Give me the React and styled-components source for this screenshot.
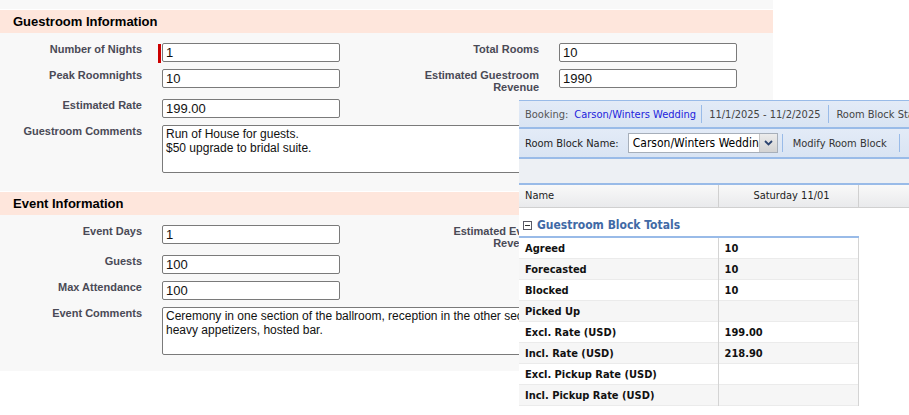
import React from 'react';
import styled, { createGlobalStyle } from 'styled-components';

const GlobalStyle = createGlobalStyle`
  body {
    margin: 0;
    background: #fff;
    font-family: "Liberation Sans", Arial, sans-serif;
  }
`;

const Page = styled.div`
  position: relative;
  width: 909px;
  height: 415px;
  overflow: hidden;
  background: #fff;
`;

const DetailPanel = styled.div`
  width: 773px;
  background: #f8f8f8;
  padding-top: 9px;
  display: flex;
  flex-direction: column;
  gap: 2px;
`;

const SectionHeader = styled.h3`
  margin: 0;
  height: 23px;
  border-top: 1px solid #fff;
  background: #fee6dc;
  padding-left: 13px;
  font-size: 13px;
  line-height: 23px;
  font-weight: bold;
  color: #000;
`;

const FieldGrid = styled.div`
  display: grid;
  grid-template-columns: 152px 248px 149px 1fr;
  padding: 7px 0 12px;
`;

const Label = styled.div`
  padding: 3px 10px 3px 2px;
  text-align: right;
  font-size: 11px;
  line-height: 12px;
  font-weight: bold;
  color: #4a4a56;
`;

const Data = styled.div`
  position: relative;
  padding: 3px 10px 4px;
  grid-column: ${p => (p.$wide ? 'span 3' : 'auto')};
`;

const Required = styled.span`
  position: absolute;
  left: 6px;
  top: 4px;
  width: 3px;
  height: 19px;
  background: #c00;
`;

const TextInput = styled.input`
  display: block;
  box-sizing: border-box;
  width: 178px;
  height: 19px;
  padding: 0 3px;
  border: 1px solid #7a7a7a;
  border-radius: 2px;
  background: #fff;
  font: 13px "Liberation Sans", Arial, sans-serif;
  color: #111;
`;

const Comments = styled.textarea`
  display: block;
  box-sizing: border-box;
  width: 520px;
  height: 48px;
  padding: 1px 3px;
  border: 1px solid #7a7a7a;
  border-radius: 2px;
  background: #fff;
  font: 12px/14px "Liberation Sans", Arial, sans-serif;
  color: #111;
  resize: none;
  overflow: hidden;
`;

/* room block window lying over the detail page */

const BlockWindow = styled.div`
  position: absolute;
  left: 519px;
  top: 100px;
  right: 0;
  bottom: 0;
  background: #fff;
  border-top: 1px solid #99bbe8;
  font-family: "DejaVu Sans Condensed", "DejaVu Sans", sans-serif;
  font-size: 11px;
  overflow: hidden;
`;

const Bar = styled.div`
  display: flex;
  align-items: center;
  height: ${p => p.$h}px;
  padding-left: 6px;
  background: ${p => p.$bg || 'linear-gradient(#e3ebf7, #d9e4f3)'};
  border-bottom: 2px solid #99bbe8;
  white-space: nowrap;
`;

const BarLabel = styled.span`
  color: ${p => p.$color || '#555'};
  margin-right: ${p => p.$gap || 0}px;
`;

const BookingLink = styled.a`
  color: #2323dc;
  text-decoration: none;
`;

const Separator = styled.span`
  flex: none;
  width: 1px;
  height: 18px;
  margin: 0 ${p => p.$m || 7}px 0 ${p => p.$ml || p.$m || 5}px;
  background: #99bbe8;
`;

const Select = styled.div`
  display: flex;
  box-sizing: border-box;
  width: 150px;
  height: 20px;
  border: 1px solid #a7afba;
  background: #fff;
`;

const SelectText = styled.span`
  flex: 1;
  overflow: hidden;
  padding-left: 4px;
  font-size: 12px;
  line-height: 18px;
  color: #000;
`;

const SelectButton = styled.span`
  display: flex;
  align-items: center;
  justify-content: center;
  width: 17px;
  border-left: 1px solid #c6c6c6;
  background: linear-gradient(#ececec, #d3d3d3);
`;

const ToolButton = styled.span`
  padding: 0 6px;
  color: #333;
`;

const GridHeader = styled.div`
  display: flex;
  height: 22px;
  border-bottom: 1px solid #d0d0d0;
  background: linear-gradient(#f9f9f9, #e9eaec);
  color: #222;
`;

const HeaderCell = styled.div`
  box-sizing: border-box;
  flex: ${p => (p.$w ? `0 0 ${p.$w}px` : '1')};
  padding-left: 6px;
  line-height: 22px;
  text-align: ${p => (p.$center ? 'center' : 'left')};
  border-left: ${p => (p.$first ? 'none' : '1px solid #d0d0d0')};
`;

const TotalsHeading = styled.div`
  display: flex;
  align-items: center;
  gap: 5px;
  box-sizing: border-box;
  height: 28px;
  padding: 7px 0 0 4px;
  font-size: 12px;
  line-height: 15px;
  font-weight: bold;
  color: #416aa6;
`;

const TotalsTable = styled.table`
  width: 339px;
  border-collapse: collapse;
  border-top: 2px solid #99bbe8;
  table-layout: fixed;
`;

const Row = styled.tr`
  background: ${p => (p.$alt ? '#f6f6f6' : '#fff')};
  border-bottom: 1px solid #ebebeb;
`;

const Cell = styled.td`
  box-sizing: border-box;
  width: ${p => p.$w}px;
  height: 21px;
  padding: 3px 0 0 6px;
  font-weight: bold;
  line-height: 14px;
  color: #111;
  border-right: 1px solid #d4d4d4;
  white-space: nowrap;
`;

const Chevron = () => (
  <svg width="9" height="6" viewBox="0 0 9 6">
    <polyline points="1,1 4.5,4.5 8,1" fill="none" stroke="#2c4470" strokeWidth="1.8" />
  </svg>
);

const CollapseIcon = () => (
  <svg width="9" height="9" viewBox="0 0 9 9">
    <rect x="0.5" y="0.5" width="8" height="8" fill="#fff" stroke="#5a5a66" />
    <line x1="2" y1="4.5" x2="7" y2="4.5" stroke="#333" />
  </svg>
);

const totals = [
  ['Agreed', '10'],
  ['Forecasted', '10'],
  ['Blocked', '10'],
  ['Picked Up', ''],
  ['Excl. Rate (USD)', '199.00'],
  ['Incl. Rate (USD)', '218.90'],
  ['Excl. Pickup Rate (USD)', ''],
  ['Incl. Pickup Rate (USD)', ''],
];

const App = () => {
  return (
    <Page>
      <GlobalStyle />
      <DetailPanel>
        <section>
          <SectionHeader>Guestroom Information</SectionHeader>
          <FieldGrid>
            <Label>Number of Nights</Label>
            <Data>
              <Required />
              <TextInput defaultValue="1" />
            </Data>
            <Label>Total Rooms</Label>
            <Data>
              <TextInput defaultValue="10" />
            </Data>

            <Label>Peak Roomnights</Label>
            <Data>
              <TextInput defaultValue="10" />
            </Data>
            <Label>Estimated Guestroom Revenue</Label>
            <Data>
              <TextInput defaultValue="1990" />
            </Data>

            <Label>Estimated Rate</Label>
            <Data>
              <TextInput defaultValue="199.00" />
            </Data>
            <Label />
            <Data />

            <Label>Guestroom Comments</Label>
            <Data $wide>
              <Comments defaultValue={'Run of House for guests.\n$50 upgrade to bridal suite.'} />
            </Data>
          </FieldGrid>
        </section>

        <section>
          <SectionHeader>Event Information</SectionHeader>
          <FieldGrid>
            <Label>Event Days</Label>
            <Data>
              <TextInput defaultValue="1" />
            </Data>
            <Label>
              Estimated Event
              <br />
              Revenue
            </Label>
            <Data>
              <TextInput defaultValue="" />
            </Data>

            <Label>Guests</Label>
            <Data>
              <TextInput defaultValue="100" />
            </Data>
            <Label />
            <Data />

            <Label>Max Attendance</Label>
            <Data>
              <TextInput defaultValue="100" />
            </Data>
            <Label />
            <Data />

            <Label>Event Comments</Label>
            <Data $wide>
              <Comments
                defaultValue={
                  'Ceremony in one section of the ballroom, reception in the other section,\nheavy appetizers, hosted bar.'
                }
              />
            </Data>
          </FieldGrid>
        </section>
      </DetailPanel>

      <BlockWindow>
        <Bar $h={26}>
          <BarLabel $gap={6}>Booking:</BarLabel>
          <BookingLink href="#">Carson/Winters Wedding</BookingLink>
          <Separator />
          <BarLabel $color="#444">11/1/2025 - 11/2/2025</BarLabel>
          <Separator $ml={8} />
          <BarLabel $color="#444">Room Block Status</BarLabel>
        </Bar>

        <Bar $h={28}>
          <BarLabel $color="#222" $gap={9}>Room Block Name:</BarLabel>
          <Select>
            <SelectText>Carson/Winters Wedding</SelectText>
            <SelectButton>
              <Chevron />
            </SelectButton>
          </Select>
          <Separator $m={4} />
          <ToolButton>Modify Room Block</ToolButton>
          <Separator $m={4} $ml={6} />
          <ToolButton>Add Room Block</ToolButton>
        </Bar>

        <Bar $h={24} $bg="#edf0f4" />

        <GridHeader>
          <HeaderCell $w={199} $first>Name</HeaderCell>
          <HeaderCell $w={140} $center>Saturday 11/01</HeaderCell>
          <HeaderCell />
        </GridHeader>

        <TotalsHeading>
          <CollapseIcon />
          Guestroom Block Totals
        </TotalsHeading>

        <TotalsTable>
          <tbody>
            {totals.map(([name, value], i) => (
              <Row key={name} $alt={i % 2 === 1}>
                <Cell $w={199}>{name}</Cell>
                <Cell $w={140}>{value}</Cell>
              </Row>
            ))}
          </tbody>
        </TotalsTable>
      </BlockWindow>
    </Page>
  );
};

export default App;
